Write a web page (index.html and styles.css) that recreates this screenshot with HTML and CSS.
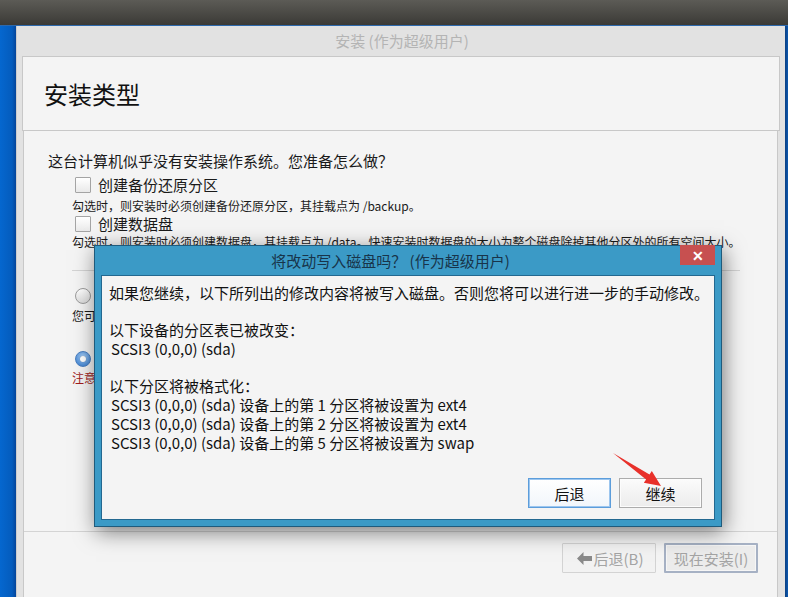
FILE: index.html
```html
<!DOCTYPE html>
<html lang="zh-CN">
<head>
<meta charset="utf-8">
<title>安装 (作为超级用户)</title>
<link rel="stylesheet" href="styles.css">
</head>
<body>
<div class="screen">
  <div class="topbar"></div>
  <div class="desk">
    <div class="strip-left"></div>
    <div class="window">
      <div class="wtitle">安装 (作为超级用户)</div>
      <div class="header"><h1 class="page-title">安装类型</h1></div>
      <div class="panel">
        <div class="main">
          <p class="question">这台计算机似乎没有安装操作系统。您准备怎么做？</p>
          <div class="opt"><span class="cb"></span><span>创建备份还原分区</span></div>
          <p class="hint">勾选时，则安装时必须创建备份还原分区，其挂载点为 /backup。</p>
          <div class="opt opt2"><span class="cb"></span><span>创建数据盘</span></div>
          <p class="hint hint2">勾选时，则安装时必须创建数据盘，其挂载点为 /data。快速安装时数据盘的大小为整个磁盘除掉其他分区外的所有空间大小。</p>
          <div class="sep"></div>
          <div class="radio-row"><span class="radio"></span><span>清除整个磁盘并安装系统</span></div>
          <p class="hint">您可以在安装时选择清除整个磁盘上的所有数据。</p>
          <div class="radio-row radio-row2"><span class="radio on"></span><span>其他选项</span></div>
          <p class="hint warn">注意：您可以自己创建、调整分区，或者为系统选择多个分区。</p>
        </div>
        <div class="footer">
          <button class="btn btn-disabled"><svg class="back-ico" width="15" height="13" viewBox="0 0 15 13"><polygon points="0,6.5 6.5,0 6.5,4 15,4 15,9 6.5,9 6.5,13" fill="#8a8a8a"/></svg>后退(B)</button>
          <button class="btn btn-default">现在安装(I)</button>
        </div>
      </div>
    </div>
    <div class="strip-right"></div>
  </div>

  <div class="dialog">
    <div class="dtitle">将改动写入磁盘吗？ (作为超级用户)</div>
    <div class="dclose">&#x2715;</div>
    <div class="dbody">
      <p class="dline first">如果您继续，以下所列出的修改内容将被写入磁盘。否则您将可以进行进一步的手动修改。</p>
      <div class="dblock">
        <p class="dline">以下设备的分区表已被改变：</p>
        <p class="dline dev">SCSI3 (0,0,0) (sda)</p>
      </div>
      <div class="dblock">
        <p class="dline">以下分区将被格式化：</p>
        <p class="dline dev">SCSI3 (0,0,0) (sda) 设备上的第 1 分区将被设置为 ext4</p>
        <p class="dline dev">SCSI3 (0,0,0) (sda) 设备上的第 2 分区将被设置为 ext4</p>
        <p class="dline dev">SCSI3 (0,0,0) (sda) 设备上的第 5 分区将被设置为 swap</p>
      </div>
      <div class="dbuttons">
        <button class="dbtn dbtn-focus">后退</button>
        <button class="dbtn">继续</button>
      </div>
    </div>
  </div>

  <svg class="red-arrow" width="62" height="42" viewBox="605 448 62 42">
    <polygon points="613,453 649.5,474.4 651.8,471.1 661,486 643.8,482.7 646.1,479.4" fill="#e8302a"/>
  </svg>
</div>
</body>
</html>
```

FILE: styles.css
```css
* { box-sizing: border-box; }
html, body { margin: 0; padding: 0; }
body {
  width: 788px;
  height: 597px;
  overflow: hidden;
  font-family: "Noto Sans CJK SC", "Noto Sans", sans-serif;
  color: #1a1a1a;
  text-spacing-trim: space-all;
}
p { margin: 0; }

.screen {
  position: relative;
  width: 788px;
  height: 597px;
  display: flex;
  flex-direction: column;
  background: #0560c4;
}

.topbar {
  height: 26px;
  flex: none;
  background: linear-gradient(#5c5b56, #3b3a36);
  border-bottom: 1px solid #2d69ad;
}

.desk {
  flex: 1;
  display: flex;
  min-height: 0;
}

.strip-left {
  width: 16px;
  flex: none;
  background: linear-gradient(to right, #0567cf 0%, #045cbd 75%, #05459a 100%);
}
.strip-right {
  width: 3px;
  flex: none;
  background: linear-gradient(to right, #0c3f80, #0b58b0);
}

.window {
  flex: 1;
  background: #e2e2e2;
  border-left: 1px solid #cdcdcd;
  padding: 0 5px 0 5px;
  display: flex;
  flex-direction: column;
  min-width: 0;
}

.wtitle {
  height: 30px;
  flex: none;
  line-height: 30px;
  text-align: center;
  font-size: 15px;
  color: #b4b4b4;
  padding-left: 2px;
}

.header {
  height: 75px;
  flex: none;
  border: 1px solid #c8c8c8;
  background: #f4f4f4;
  display: flex;
  align-items: center;
  padding-left: 21px;
}
.page-title {
  margin: 0;
  font-size: 24px;
  font-weight: normal;
  color: #111;
  line-height: 30px;
}

.panel {
  flex: 1;
  margin: 0 2px 0 1px;
  border: 1px solid #c8c8c8;
  border-top: none;
  border-bottom: none;
  background: #f4f4f4;
  display: flex;
  flex-direction: column;
}

.main {
  height: 400px;
  flex: none;
  padding: 20px 0 0 24px;
  display: flex;
  flex-direction: column;
  align-items: flex-start;
}

.question {
  font-size: 15px;
  line-height: 20px;
}

.opt {
  display: flex;
  align-items: center;
  gap: 7px;
  height: 18px;
  margin: 5px 0 0 27px;
  font-size: 15px;
  line-height: 18px;
}
.opt2 { margin-top: 1px; }

.cb {
  width: 16px;
  height: 16px;
  border: 1px solid #a4a4a4;
  border-radius: 1px;
  background: linear-gradient(#ffffff, #e9e9e9);
}

.hint {
  font-size: 12px;
  line-height: 16px;
  margin: 4px 0 0 24px;
  white-space: nowrap;
}
.hint2 { margin-top: 1px; }
.warn { color: #a01c1c; margin-top: 3px; }

.sep {
  width: 668px;
  height: 1px;
  margin: 20px 0 0 24px;
  background: #d4d4d4;
}

.radio-row {
  display: flex;
  align-items: center;
  gap: 7px;
  height: 16px;
  margin: 17px 0 0 27px;
  font-size: 15px;
}
.radio-row2 { margin-top: 27px; }
.radio-row + .hint { margin-top: 4px; }
.radio-row + .warn { margin-top: 3px; }

.radio {
  width: 16px;
  height: 16px;
  border-radius: 50%;
  border: 1px solid #9c9c9c;
  background: linear-gradient(#ffffff, #dcdcdc);
  display: flex;
  align-items: center;
  justify-content: center;
}
.radio.on {
  border-color: #4a7fc0;
  background: radial-gradient(circle at 50% 35%, #a9cdf3, #4f8fd8 70%, #3b75c0);
}
.radio.on::after {
  content: "";
  width: 6px;
  height: 6px;
  border-radius: 50%;
  background: #ffffff;
  box-shadow: 0 0 1px rgba(0,0,0,0.3);
}

.footer {
  flex: 1;
  border-top: 1px solid #d4d4d4;
  display: flex;
  justify-content: flex-end;
  align-items: flex-start;
  gap: 8px;
  padding: 11px 19px 0 0;
}

.btn {
  width: 94px;
  height: 30px;
  font-family: inherit;
  font-size: 15px;
  color: #a4a4a4;
  background: #f2f2f2;
  border: 1px solid #d3d3d3;
  border-radius: 1px;
  display: flex;
  align-items: center;
  justify-content: center;
  gap: 2px;
  padding: 0;
}
.back-ico { margin-left: 2px; }
.btn-default {
  border: 2px solid #a6b1c4;
  background: #ececec;
  box-shadow: inset 0 0 0 1px #f6f6f6;
}

/* Dialog (overlay) */
.dialog {
  position: absolute;
  left: 94px;
  top: 245px;
  width: 628px;
  height: 282px;
  border: 1px solid #1f5b7c;
  background: #3b9ac6;
  padding: 0 6px 6px;
  display: flex;
  flex-direction: column;
  box-shadow: 2px 5px 20px rgba(0, 0, 0, 0.5);
}
.dtitle {
  height: 29px;
  flex: none;
  line-height: 29px;
  text-align: center;
  font-size: 15px;
  color: #18344a;
  padding-right: 35px;
}
.dclose {
  position: absolute;
  top: -1px;
  right: 6px;
  width: 35px;
  height: 20px;
  background: #c75050;
  color: #ffffff;
  font-size: 14px;
  font-weight: bold;
  line-height: 20px;
  text-align: center;
}
.dbody {
  flex: 1;
  border: 1px solid #236890;
  background: #f4f4f4;
  padding: 7px 12px 11px 7px;
  display: flex;
  flex-direction: column;
}
.dline {
  font-size: 15px;
  line-height: 19px;
  white-space: nowrap;
  color: #111;
}
.dline.first { line-height: 20px; }
.dblock { margin-top: 17px; }
.dblock + .dblock { margin-top: 18px; }
.dev { padding-left: 2px; }

.dbuttons {
  margin-top: auto;
  display: flex;
  justify-content: flex-end;
  gap: 8px;
}
.dbtn {
  width: 83px;
  height: 30px;
  font-family: inherit;
  font-size: 15px;
  color: #111;
  background: linear-gradient(#fbfbfb, #ececec);
  border: 1px solid #acacac;
  box-shadow: inset 0 0 0 1px #fcfcfc;
  padding: 0;
}
.dbtn-focus {
  border: 1px solid #5c9ddb;
  box-shadow: inset 0 0 0 1px #9cc6ef;
  background: linear-gradient(#ffffff, #f1f6fb);
}

.red-arrow {
  position: absolute;
  left: 605px;
  top: 448px;
}
```
